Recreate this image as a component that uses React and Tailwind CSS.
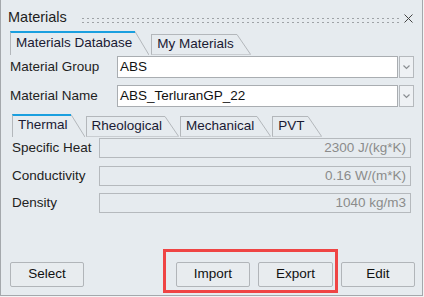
import * as React from "react";

function Tab({ label, active, tall }) {
  // tab = box with left/top border + slanted right edge drawn as svg
  const h = active ? (tall ? 24 : 23) : 21;
  return (
    <div className={active ? (tall ? "flex h-[24px]" : "flex h-[23px]") : "flex h-[21px]"}>
      <div
        className={
          active
            ? "flex items-center pb-[2px] pl-[5px] pr-[3px] border-l border-l-[#b3b7bb] border-t-2 border-t-[#1a9fdf] text-[#1a1a33]"
            : "flex items-center pl-[5px] pr-[3px] border-l border-l-[#b3b7bb] border-t border-t-[#b3b7bb] border-b border-b-[#c9cdd1] text-[#1a1a33]"
        }
      >
        {label}
      </div>
      <svg width="14" height={h} className="shrink-0">
        <line x1="0" y1="0.5" x2="14" y2={h} stroke="#b3b7bb" strokeWidth="1" />
        {!active && <line x1="0" y1={h - 0.5} x2="14" y2={h - 0.5} stroke="#c9cdd1" strokeWidth="1" />}
      </svg>
    </div>
  );
}

function Combo({ value }) {
  return (
    <div className="flex h-[22px]">
      <div className="w-[281px] h-full bg-white border border-[#a9adb1] flex items-center pl-[2px] text-[#111]">
        {value}
      </div>
      <div className="ml-[1px] w-[15px] h-full border border-[#b5b9bd] bg-[#eef1f4] flex items-center justify-center">
        <svg width="7" height="5" viewBox="0 0 7 5">
          <polyline points="0.5,0.5 3.5,3.5 6.5,0.5" fill="none" stroke="#8a8e92" strokeWidth="1.2" />
        </svg>
      </div>
    </div>
  );
}

function Field({ label, value, className }) {
  return (
    <div className={`flex items-center h-[20px] pl-[11px] ${className}`}>
      <div className="w-[87px] text-[#222]">{label}</div>
      <div className="w-[312px] h-full border border-[#b5b9bd] flex items-center justify-end pr-[4px] text-[#8b8b8b]">
        {value}
      </div>
    </div>
  );
}

function Btn({ children, w }) {
  return (
    <button className={`${w} h-[25px] border border-[#b1b5b9] rounded-[2px] bg-[#e8ecef] text-[#111] flex items-center justify-center`}>
      {children}
    </button>
  );
}

export default function App() {
  const dots = Array.from({ length: 64 });
  return (
    <div className="w-[424px] h-[297px] bg-[#f3f4f5] font-['Liberation_Sans',Arial,sans-serif] text-[13.5px]">
      <div className="relative w-[423px] h-[296px] bg-[#e6ebef] border-l border-r border-b border-[#a4a8ac] flex flex-col">
        {/* header */}
        <div className="h-[31px] pt-[5px] flex items-center pl-[7px] pr-[9px]">
          <span className="text-[14.5px] text-[#1e1e1e]">Materials</span>
          <svg width="318" height="12" className="ml-[15px]">
            {dots.map((_, i) => (
              <g key={i}>
                <rect x={i * 5} y="6" width="2" height="1" fill="#9ea2a6" />
                <rect x={i * 5} y="10" width="2" height="1" fill="#9ea2a6" />
              </g>
            ))}
          </svg>
          <div className="flex-1" />
          <svg width="9" height="9" viewBox="0 0 9 9">
            <line x1="0.5" y1="0.5" x2="8.5" y2="8.5" stroke="#444" strokeWidth="1" />
            <line x1="8.5" y1="0.5" x2="0.5" y2="8.5" stroke="#444" strokeWidth="1" />
          </svg>
        </div>

        {/* top tabs */}
        <div className="h-[24px] flex items-end pl-[9px] gap-[2px]">
          <Tab label="Materials Database" active tall />
          <Tab label="My Materials" />
        </div>

        <div className="mt-[1px] flex items-center pl-[9px]">
          <div className="w-[107px] text-[#1e1e1e]">Material Group</div>
          <Combo value="ABS" />
        </div>
        <div className="mt-[7px] flex items-center pl-[9px]">
          <div className="w-[107px] text-[#1e1e1e]">Material Name</div>
          <Combo value="ABS_TerluranGP_22" />
        </div>

        {/* property tabs */}
        <div className="mt-[7px] h-[23px] flex items-end pl-[11px] gap-[1px]">
          <Tab label="Thermal" active />
          <Tab label="Rheological" />
          <Tab label="Mechanical" />
          <Tab label="PVT" />
        </div>

        <Field label="Specific Heat" value="2300 J/(kg*K)" className="mt-[1px]" />
        <Field label="Conductivity" value="0.16 W/(m*K)" className="mt-[8px]" />
        <Field label="Density" value="1040 kg/m3" className="mt-[7px]" />

        <div className="flex-1" />

        {/* buttons */}
        <div className="flex items-center pl-[9px] pr-[7px] mb-[8px]">
          <Btn w="w-[74px]">Select</Btn>
          <div className="flex-1" />
          <div className="flex gap-[8px]">
            <Btn w="w-[74px]">Import</Btn>
            <Btn w="w-[75px]">Export</Btn>
            <Btn w="w-[74px]">Edit</Btn>
          </div>
        </div>

        {/* highlight box */}
        <div className="absolute left-[162px] top-[249px] w-[175px] h-[44px] border-[3px] border-[#ef4444]" />
      </div>
    </div>
  );
}
